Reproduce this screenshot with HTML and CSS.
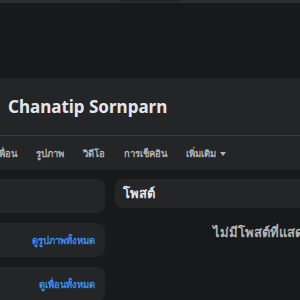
FILE: index.html
```html
<!DOCTYPE html>
<html lang="th">

<head>
  <meta charset="UTF-8" />
  <title>Chanatip Sornparn</title>
  <link rel="stylesheet" href="styles.css">
</head>

<body>

  <div class="topbar">
    <div class="topbar-thumb"></div>
  </div>

  <div class="cover"></div>

  <div class="profile">
    <h1 class="name">Chanatip Sornparn</h1>
    <div class="divider"></div>
    <ul class="tabs">
      <li class="tab">เพื่อน</li>
      <li class="tab">รูปภาพ</li>
      <li class="tab">วิดีโอ</li>
      <li class="tab">การเช็คอิน</li>
      <li class="tab">เพิ่มเติม <span class="caret"></span></li>
    </ul>
  </div>

  <div class="main">
    <div class="side">
      <div class="card"></div>
      <div class="card card-link"><a href="#" class="link">ดูรูปภาพทั้งหมด</a></div>
      <div class="card card-link"><a href="#" class="link">ดูเพื่อนทั้งหมด</a></div>
    </div>
    <div class="feed">
      <div class="card card-title">โพสต์</div>
      <p class="empty">ไม่มีโพสต์ที่แสดง</p>
    </div>
  </div>

</body>

</html>
```

FILE: styles.css
```css
body {
  margin: 0;
  width: 300px;
  height: 300px;
  overflow: hidden;
  background-color: #18191a;
  color: #e4e6eb;
  font-family: "Noto Sans", "DejaVu Sans", sans-serif;
}

.topbar {
  height: 3px;
  background-color: #2c2d2e;
  display: flex;
  justify-content: center;
}

.topbar-thumb {
  width: 58px;
  height: 2px;
  background-color: #232425;
}

.cover {
  height: 75px;
}

.profile {
  background-color: #242526;
  height: 92px;
}

.name {
  margin: 0;
  padding: 16px 0 0 8px;
  height: 57px;
  box-sizing: border-box;
  font-size: 17px;
  font-weight: 700;
  line-height: 26px;
}

.divider {
  height: 1px;
  background-color: #3a3b3c;
}

.tabs {
  list-style: none;
  margin: 0 0 0 -4px;
  padding: 0;
  display: flex;
  gap: 19px;
  height: 34px;
  align-items: center;
}

.tab {
  font-size: 9.5px;
  font-weight: 600;
  color: #b0b3b8;
  white-space: nowrap;
}

.caret {
  display: inline-block;
  width: 0;
  height: 0;
  border-left: 3px solid transparent;
  border-right: 3px solid transparent;
  border-top: 4px solid #b0b3b8;
  vertical-align: middle;
  margin-left: 2px;
}

.main {
  display: flex;
  gap: 10px;
  padding-top: 9px;
}

.side {
  flex: 0 0 200px;
  margin-left: -95px;
  display: flex;
  flex-direction: column;
  gap: 10px;
}

.feed {
  flex: 0 0 300px;
}

.card {
  background-color: #242526;
  border-radius: 8px;
  height: 34px;
}

.card-link {
  display: flex;
  align-items: center;
  justify-content: flex-end;
  padding-right: 10px;
}

.link {
  color: #3a8ef5;
  text-decoration: none;
  font-size: 9.5px;
  font-weight: 600;
}

.card-title {
  height: 29px;
  display: flex;
  align-items: center;
  padding-left: 8px;
  font-size: 13px;
  font-weight: 700;
}

.empty {
  margin: 14px 0 0 98px;
  color: #b0b3b8;
  font-size: 13px;
  font-weight: 700;
  white-space: nowrap;
}
```
